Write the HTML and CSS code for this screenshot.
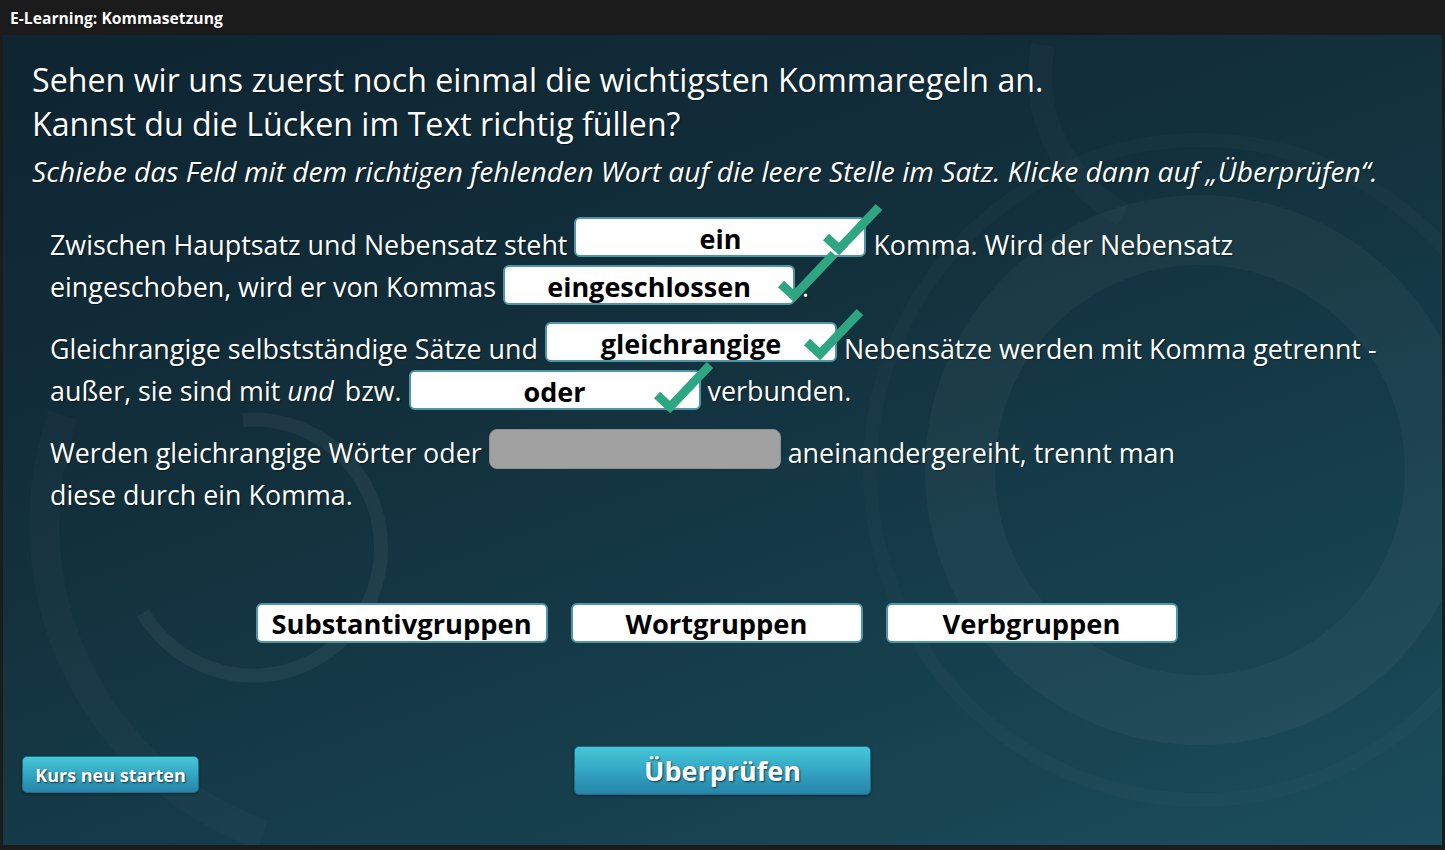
FILE: index.html
```html
<!DOCTYPE html>
<html lang="de">
<head>
<meta charset="utf-8">
<title>E-Learning: Kommasetzung</title>
<link rel="stylesheet" href="styles.css">
</head>
<body>
<div class="app">
  <header class="titlebar">E-Learning: Kommasetzung</header>
  <main class="stage">
    <svg class="deco" viewBox="0 0 1439 810" preserveAspectRatio="none" aria-hidden="true">
      <circle cx="1197" cy="435" r="240" fill="none" stroke="#ffffff" stroke-opacity="0.035" stroke-width="70"/>
      <circle cx="1197" cy="435" r="330" fill="none" stroke="#ffffff" stroke-opacity="0.02" stroke-width="14"/>
      <path d="M 240 385 A 128 128 0 1 1 140 578" fill="none" stroke="#ffffff" stroke-opacity="0.05" stroke-width="14"/>
      <path d="M 60 380 A 330 330 0 0 0 260 800" fill="none" stroke="#ffffff" stroke-opacity="0.025" stroke-width="30"/>
      <path d="M 1040 10 A 160 160 0 0 0 1120 180" fill="none" stroke="#ffffff" stroke-opacity="0.025" stroke-width="24"/>
    </svg>
    <div class="content">
      <h1 class="lead">Sehen wir uns zuerst noch einmal die wichtigsten Kommaregeln an.<br>Kannst du die Lücken im Text richtig füllen?</h1>
      <p class="instr">Schiebe das Feld mit dem richtigen fehlenden Wort auf die leere Stelle im Satz. Klicke dann auf „Überprüfen“.</p>
      <div class="rules">
        <p class="rule">Zwischen Hauptsatz und Nebensatz steht <span class="gap g1">ein<svg class="check c1" viewBox="0 0 66 56"><polyline points="7,36 20,48 60,6"/></svg></span> Komma. Wird der Nebensatz<br>eingeschoben, wird er von Kommas <span class="gap g2">eingeschlossen<svg class="check c2" viewBox="0 0 66 56"><polyline points="7,36 20,48 60,6"/></svg></span> .</p>
        <p class="rule">Gleichrangige selbstständige Sätze und <span class="gap g3">gleichrangige<svg class="check c3" viewBox="0 0 66 56"><polyline points="7,36 20,48 60,6"/></svg></span> Nebensätze werden mit Komma getrennt -<br>außer, sie sind mit <em>und</em> bzw. <span class="gap g4">oder<svg class="check c4" viewBox="0 0 66 56"><polyline points="7,36 20,48 60,6"/></svg></span> verbunden.</p>
        <p class="rule">Werden gleichrangige Wörter oder <span class="gap empty g5">&nbsp;</span> aneinandergereiht, trennt man<br>diese durch ein Komma.</p>
      </div>
      <div class="options">
        <div class="option">Substantivgruppen</div>
        <div class="option">Wortgruppen</div>
        <div class="option">Verbgruppen</div>
      </div>
      <div class="actions">
        <button class="btn btn-restart">Kurs neu starten</button>
        <button class="btn btn-check">Überprüfen</button>
        <span></span>
      </div>
    </div>
  </main>
</div>
</body>
</html>
```
FILE: styles.css
```css
html, body {
  margin: 0;
  padding: 0;
  background: #1b1b1b;
}
.app {
  width: 1445px;
  height: 850px;
  display: flex;
  flex-direction: column;
  font-family: "Open Sans", "Noto Sans", sans-serif;
  color: #fff;
}
.titlebar {
  height: 35px;
  box-sizing: border-box;
  padding: 7px 0 0 10px;
  font-size: 15.7px;
  font-weight: 700;
  line-height: 22px;
  color: #fff;
  text-shadow: 0 0 1px #000;
}
.stage {
  flex: 1;
  margin: 0 3px 5px 3px;
  position: relative;
  overflow: hidden;
  background: linear-gradient(160deg, #0e2431 0%, #12303c 40%, #163e4b 70%, #1c4d5c 100%);
}
.deco {
  position: absolute;
  inset: 0;
  width: 100%;
  height: 100%;
  z-index: 0;
}
.content {
  position: relative;
  z-index: 1;
  height: 100%;
  box-sizing: border-box;
  display: flex;
  flex-direction: column;
  padding: 23px 0 50px 0;
  text-shadow: 1px 1px 1px rgba(0, 0, 0, 0.45);
}
.lead {
  margin: 0;
  padding-left: 29px;
  font-size: 32.2px;
  font-weight: 400;
  line-height: 44px;
  font-stretch: 90%;
}
.instr {
  margin: 5px 0 0;
  padding-left: 29px;
  font-size: 28.2px;
  font-style: italic;
  line-height: 40px;
  font-stretch: 90%;
}
.rules {
  margin-top: 33px;
  padding-left: 47px;
}
.rule {
  margin: 0 0 20px;
  font-size: 26.85px;
  line-height: 42px;
  font-stretch: 90%;
}
.rule:last-child {
  margin-bottom: 0;
}
.rule em {
  font-style: italic;
  padding-right: 4px;
}
.gap {
  display: inline-block;
  position: relative;
  width: 292px;
  height: 40px;
  box-sizing: border-box;
  margin-top: -9px;
  padding-top: 2px;
  background: #fff;
  border: 2px solid #4f97a8;
  border-radius: 6px;
  color: #000;
  font-size: 27px;
  font-weight: 700;
  line-height: 36px;
  text-align: center;
  text-shadow: none;
}
.g1 { vertical-align: 6px; }
.g2 { vertical-align: 0; }
.g3 { vertical-align: 5px; }
.g4 { vertical-align: -1px; }
.g5 { vertical-align: 3px; }
.gap.empty {
  background: #a1a1a1;
  border: 1px solid #8a8f92;
  border-radius: 8px;
}
.check {
  position: absolute;
  width: 66px;
  height: 56px;
  fill: none;
  stroke: #2ea682;
  stroke-width: 9;
  stroke-linejoin: miter;
}
.c1 { left: 243px; top: -18px; }
.c2 { left: 269px; top: -19px; }
.c3 { left: 253px; top: -18px; }
.c4 { left: 239px; top: -13px; }
.options {
  margin-top: 87px;
  padding-right: 12px;
  display: flex;
  justify-content: center;
  gap: 23px;
}
.option {
  width: 292px;
  height: 40px;
  box-sizing: border-box;
  padding-top: 1px;
  background: #fff;
  border: 2px solid #4f97a8;
  border-radius: 6px;
  color: #000;
  font-size: 27.3px;
  font-weight: 700;
  line-height: 35px;
  text-align: center;
  text-shadow: none;
  font-stretch: 90%;
}
.actions {
  margin-top: auto;
  display: grid;
  grid-template-columns: 1fr auto 1fr;
  align-items: end;
}
.btn {
  font-family: "Open Sans", "Noto Sans", sans-serif;
  font-weight: 700;
  color: #fff;
  border: 1px solid #1d6d88;
  background: linear-gradient(180deg, #46c7d8 0%, #32a3c1 55%, #2684a9 100%);
  text-shadow: 1px 1px 2px rgba(0, 0, 0, 0.65);
  box-shadow: 0 1px 3px rgba(0, 0, 0, 0.4);
  padding: 0;
  cursor: pointer;
}
.btn-restart {
  justify-self: start;
  margin-left: 19px;
  width: 177px;
  height: 37px;
  margin-bottom: 2px;
  border-radius: 5px;
  font-size: 18px;
  font-stretch: 90%;
}
.btn-check {
  width: 297px;
  height: 49px;
  border-radius: 5px;
  font-size: 27px;
  font-stretch: 90%;
}
```
